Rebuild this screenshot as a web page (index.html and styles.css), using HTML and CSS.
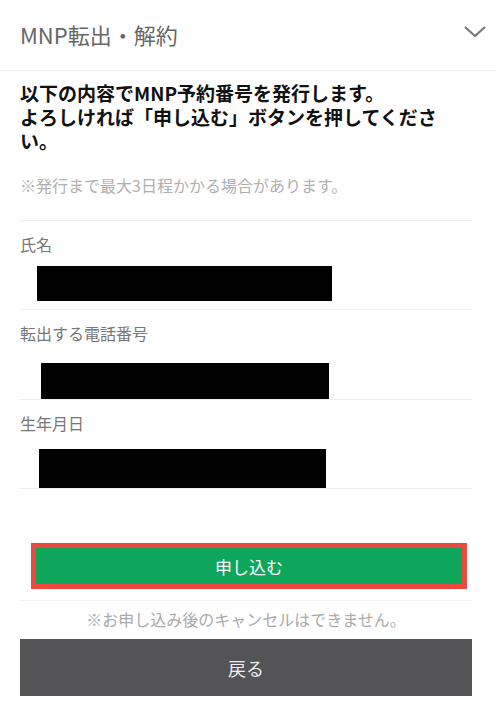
FILE: index.html
```html
<!DOCTYPE html>
<html lang="ja">
<head>
    <meta charset="UTF-8">
    <meta name="viewport" content="width=device-width, initial-scale=1.0">
    <title>MNP転出・解約</title>
    <link rel="stylesheet" href="styles.css">
</head>
<body>
    <div class="header">
        <div class="header-title">MNP転出・解約</div>
        <svg class="chevron" width="22" height="12" viewBox="0 0 22 12">
            <polyline points="1,1 11,10 21,1" fill="none" stroke="#7a7a7a" stroke-width="2.2"/>
        </svg>
    </div>
    <div class="content">
        <div class="lead">以下の内容でMNP予約番号を発行します。<br>よろしければ「申し込む」ボタンを押してください。</div>
        <div class="note">※発行まで最大3日程かかる場合があります。</div>

        <div class="row row-name">
            <div class="label">氏名</div>
            <div class="value"></div>
        </div>
        <div class="row row-tel">
            <div class="label">転出する電話番号</div>
            <div class="value"></div>
        </div>
        <div class="row row-birth">
            <div class="label">生年月日</div>
            <div class="value"></div>
        </div>

        <div class="submit-wrap">
            <button class="submit-btn">申し込む</button>
        </div>
        <div class="cancel-note">※お申し込み後のキャンセルはできません。</div>
        <button class="back-btn">戻る</button>
    </div>
</body>
</html>
```

FILE: styles.css
```css
body {
    margin: 0;
    padding: 0;
    background-color: #fff;
    font-family: "Noto Sans CJK JP", "Noto Sans", sans-serif;
    color: #111;
}
.header {
    height: 70px;
    border-bottom: 1px solid #efefef;
    display: flex;
    align-items: center;
    justify-content: space-between;
    padding: 0 10px 0 20px;
}
.header-title {
    font-size: 22px;
    color: #666;
    margin-top: -3px;
}
.chevron {
    margin-top: -6px;
}
.content {
    padding: 0 24px 0 20px;
}
.lead {
    margin-top: 10px;
    font-size: 19px;
    font-weight: bold;
    line-height: 24px;
    color: #111;
}
.note {
    margin-top: 20px;
    font-size: 16px;
    line-height: 24px;
    color: #b0b0b0;
}
.row {
    margin-top: 0;
    border-top: 1px solid #efefef;
    padding-top: 12px;
}
.note + .row {
    margin-top: 23px;
}
.label {
    font-size: 16px;
    line-height: 22px;
    color: #777;
}
.value {
    background-color: #000;
}
.row-name .value {
    margin: 11px 0 8px 17px;
    width: 295px;
    height: 35px;
}
.row-tel .value {
    margin: 19px 0 0 21px;
    width: 288px;
    height: 36px;
}
.row-birth .value {
    margin: 15px 0 0 19px;
    width: 287px;
    height: 39px;
}
.row-birth {
    border-bottom: 1px solid #efefef;
}
.submit-wrap {
    margin-top: 54px;
    padding: 0 5px 0 11px;
}
.submit-btn {
    display: block;
    width: 100%;
    height: 46px;
    border: 5px solid #ec4a3e;
    background-color: #0ea65a;
    color: #fff;
    font-family: inherit;
    font-size: 17px;
    cursor: pointer;
}
.cancel-note {
    margin-top: 11px;
    border-top: 1px solid #f4f4f4;
    padding-top: 7px;
    text-align: center;
    font-size: 16px;
    line-height: 22px;
    color: #aaa;
}
.back-btn {
    display: block;
    width: 100%;
    height: 57px;
    margin-top: 9px;
    border: none;
    background-color: #545356;
    color: #eee;
    font-family: inherit;
    font-size: 18px;
    cursor: pointer;
}
```
